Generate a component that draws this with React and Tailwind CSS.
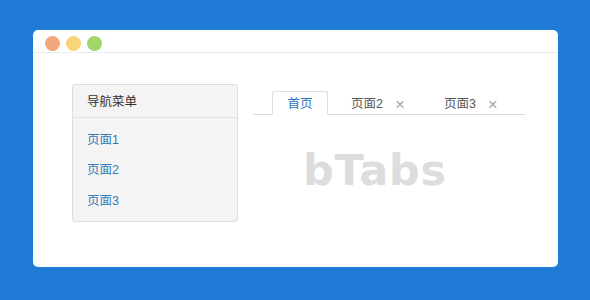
import React from 'react';

const cjk = { fontFamily: '"Liberation Sans", "Noto Sans CJK SC", sans-serif' };

const navItems = ['页面1', '页面2', '页面3'];

const App = () => {
  return (
    <div className="w-[590px] h-[300px] bg-[#1f7bd6] pt-[30px] pl-[33px]" style={cjk}>
      <div className="w-[525px] h-[237px] bg-white rounded-[5px] overflow-hidden">
        {/* title bar */}
        <div className="h-[23px] border-b border-[#ececec] flex items-center gap-[6px] pl-[12px] pt-[4px]">
          <span className="w-[15px] h-[15px] rounded-full bg-[#f3a67c]" />
          <span className="w-[15px] h-[15px] rounded-full bg-[#f8d37a]" />
          <span className="w-[15px] h-[15px] rounded-full bg-[#a2d668]" />
        </div>

        <div className="flex pl-[39px] pt-[31px]">
          {/* side nav */}
          <div className="w-[166px] h-[138px] bg-[#f4f4f4] border border-[#dddddd] rounded-[3px]">
            <div className="h-[33px] border-b border-[#e2e2e2] flex items-center pl-[14px] pt-[2px] text-[12.5px] text-[#333]">
              导航菜单
            </div>
            <div className="pt-[7px]">
              {navItems.map((item) => (
                <div key={item} className="h-[30.5px] flex items-center pl-[14px] text-[12.5px] text-[#337ab7]">
                  {item}
                </div>
              ))}
            </div>
          </div>

          {/* tabs */}
          <div className="ml-[15px] w-[272px] pt-[7px]">
            <div className="flex items-end border-b border-[#dddddd] pl-[19px] h-[24px]">
              <div className="w-[56px] h-[24px] -mb-px pt-[3px] bg-white border border-[#dddddd] border-b-white rounded-t-[3px] flex items-center justify-center text-[12.5px] text-[#2a74c4]">
                首页
              </div>
              <div className="h-[23px] flex items-center pt-[3px] pl-[23px] text-[12.5px] text-[#555]">
                页面2
                <span className="ml-[12px] text-[17px] text-[#aaa] leading-none">×</span>
              </div>
              <div className="h-[23px] flex items-center pt-[3px] pl-[39px] text-[12.5px] text-[#555]">
                页面3
                <span className="ml-[12px] text-[17px] text-[#aaa] leading-none">×</span>
              </div>
            </div>
            <div
              className="pl-[50px] pt-[34px] text-[43px] font-bold text-[#dddddd] leading-none tracking-[0.8px]"
              style={{ fontFamily: '"DejaVu Sans", sans-serif' }}
            >
              bTabs
            </div>
          </div>
        </div>
      </div>
    </div>
  );
};

export default App;
